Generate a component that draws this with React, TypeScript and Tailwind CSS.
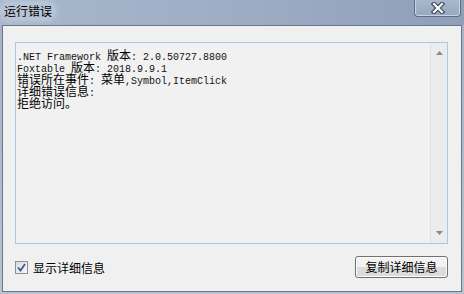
import React from 'react';

const cjk = '"Noto Sans CJK SC", sans-serif';
const mono = '"Liberation Mono", "Noto Sans CJK SC", monospace';

// ASCII at 10px mono (6px advance), CJK at 12px, like a SimSun textbox
function Mixed({ text }: { text: string }) {
  const parts = text.match(/[\u3000-\u9fff\uff00-\uffef]+|[^\u3000-\u9fff\uff00-\uffef]+/g) || [];
  return (
    <div className="h-[12px] leading-[12px] whitespace-pre overflow-visible">
      {parts.map((p, i) =>
        /[\u3000-\u9fff\uff00-\uffef]/.test(p) ? (
          <span key={i} className="text-[12px] leading-[12px]" style={{ fontFamily: cjk }}>{p}</span>
        ) : (
          <span key={i} className="text-[10px] leading-[12px] text-[#111]" style={{ fontFamily: mono }}>{p}</span>
        )
      )}
    </div>
  );
}

const lines = [
  '.NET Framework 版本: 2.0.50727.8800',
  'Foxtable 版本: 2018.9.9.1',
  '错误所在事件: 菜单,Symbol,ItemClick',
  '详细错误信息:',
  '拒绝访问。',
];

export default function App() {
  return (
    <div className="w-[464px] h-[294px] flex flex-col bg-gradient-to-b from-[#a3b2c7] to-[#b7c3d3] overflow-hidden">
      {/* title bar */}
      <div className="h-[25px] flex items-start justify-between bg-gradient-to-r from-[#a8b7cb] via-[#9eadc4] to-[#8f9fb8]">
        <div
          className="mt-[4px] ml-[3px] text-[12px] leading-[14px] text-black px-[1px] rounded-[6px] bg-[#bfcbda]/70 shadow-[0_0_6px_3px_rgba(200,212,226,0.7)]"
          style={{ fontFamily: cjk }}
        >
          运行错误
        </div>
        <div className="mr-[3px] w-[47px] h-[17px] border border-t-0 border-[#5c6d86] rounded-b-[4px] bg-gradient-to-b from-[#a9b7cb] to-[#97a7bf] flex items-center justify-center shadow-[inset_0_-1px_0_#c9d3df,inset_1px_0_0_#c9d3df,inset_-1px_0_0_#c9d3df]">
          <svg width="14" height="12" viewBox="0 0 14 12">
            <path d="M3 2 L11 10 M11 2 L3 10" stroke="#3b4656" strokeWidth="4.5" strokeLinecap="square" />
            <path d="M3 2 L11 10 M11 2 L3 10" stroke="#ffffff" strokeWidth="2.2" strokeLinecap="square" />
          </svg>
        </div>
      </div>

      {/* client area */}
      <div className="flex-1 mx-[2px] mb-[2px] border border-[#6b7786] bg-[#f0f0f0] flex flex-col">
        <div className="mt-[16px] ml-[12px] mr-[13px] h-[202px] border border-[#a9c8e6] bg-[#f1f1f1] flex">
          <div className="flex-1 pt-[5px] pl-[1px] text-black">
            {lines.map((l, i) => (
              <Mixed key={i} text={l} />
            ))}
          </div>
          <div className="w-[17px] bg-[#ececec] border-l border-[#e2e2e2] flex flex-col items-center justify-between py-[8px]">
            <svg width="7" height="4" viewBox="0 0 7 4">
              <path d="M3.5 0 L7 4 L0 4 Z" fill="#8a8a8a" />
            </svg>
            <svg width="7" height="4" viewBox="0 0 7 4">
              <path d="M0 0 L7 0 L3.5 4 Z" fill="#8a8a8a" />
            </svg>
          </div>
        </div>

        <div className="mt-[12px] ml-[12px] mr-[13px] flex items-center justify-between">
          <div className="flex items-center gap-[5px] mt-[1px]">
            <div className="w-[13px] h-[13px] border border-[#8e8f8f] bg-gradient-to-br from-[#dcdcdc] to-[#f6f6f6] flex items-center justify-center">
              <svg width="9" height="9" viewBox="0 0 9 9">
                <path d="M1 4.5 L3.5 7.5 L8 1" stroke="#3c5a96" strokeWidth="1.8" fill="none" />
              </svg>
            </div>
            <span className="text-[12px] leading-[14px] text-black" style={{ fontFamily: cjk }}>
              显示详细信息
            </span>
          </div>
          <button
            className="w-[93px] h-[22px] border border-[#707070] rounded-[3px] bg-gradient-to-b from-[#f2f2f2] from-50% to-[#dcdcdc] to-50% text-[12px] leading-[14px] text-black shadow-[inset_0_0_0_1px_#fcfcfc]"
            style={{ fontFamily: cjk }}
          >
            复制详细信息
          </button>
        </div>
      </div>
    </div>
  );
}
